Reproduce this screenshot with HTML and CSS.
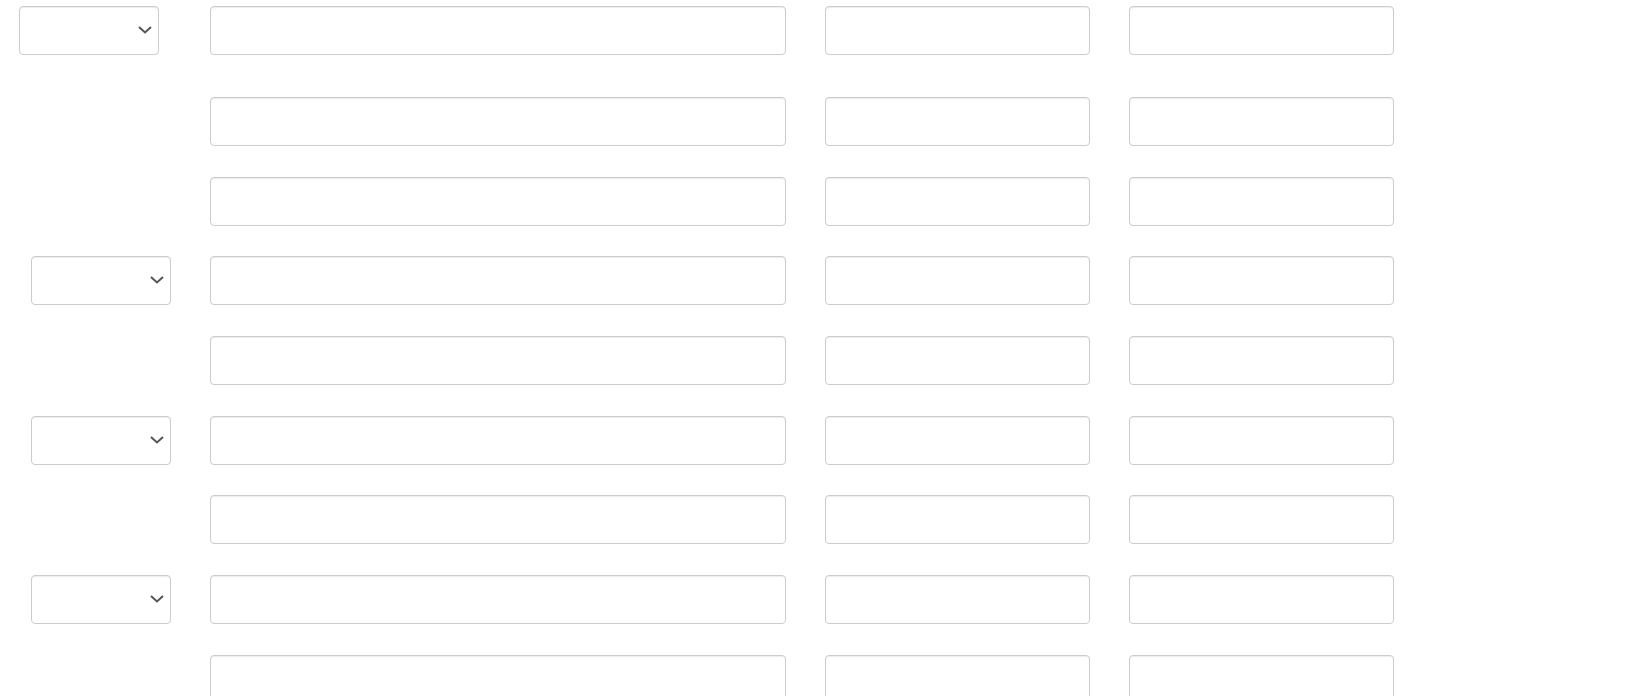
FILE: index.html
```html
<!DOCTYPE html>
<html>
<head>
<meta charset="utf-8"/>
<title>Entry grid</title>
<link rel="stylesheet" href="styles.css">
</head>
<body>
<div class="sheet">

  <div class="row row-first">
    <div class="lead">
      <div class="pick pick-first">
        <select class="field"></select>
        <svg class="caret" width="14" height="8" viewBox="0 0 14 8"><path d="M1 1 L7 6.5 L13 1" fill="none" stroke="#555" stroke-width="2"/></svg>
      </div>
    </div>
    <input class="field wide" type="text">
    <input class="field narrow" type="text">
    <input class="field narrow" type="text">
  </div>

  <div class="row">
    <div class="lead"></div>
    <input class="field wide" type="text">
    <input class="field narrow" type="text">
    <input class="field narrow" type="text">
  </div>

  <div class="row">
    <div class="lead"></div>
    <input class="field wide" type="text">
    <input class="field narrow" type="text">
    <input class="field narrow" type="text">
  </div>

  <div class="row">
    <div class="lead">
      <div class="pick">
        <select class="field"></select>
        <svg class="caret" width="14" height="8" viewBox="0 0 14 8"><path d="M1 1 L7 6.5 L13 1" fill="none" stroke="#555" stroke-width="2"/></svg>
      </div>
    </div>
    <input class="field wide" type="text">
    <input class="field narrow" type="text">
    <input class="field narrow" type="text">
  </div>

  <div class="row">
    <div class="lead"></div>
    <input class="field wide" type="text">
    <input class="field narrow" type="text">
    <input class="field narrow" type="text">
  </div>

  <div class="row">
    <div class="lead">
      <div class="pick">
        <select class="field"></select>
        <svg class="caret" width="14" height="8" viewBox="0 0 14 8"><path d="M1 1 L7 6.5 L13 1" fill="none" stroke="#555" stroke-width="2"/></svg>
      </div>
    </div>
    <input class="field wide" type="text">
    <input class="field narrow" type="text">
    <input class="field narrow" type="text">
  </div>

  <div class="row">
    <div class="lead"></div>
    <input class="field wide" type="text">
    <input class="field narrow" type="text">
    <input class="field narrow" type="text">
  </div>

  <div class="row">
    <div class="lead">
      <div class="pick">
        <select class="field"></select>
        <svg class="caret" width="14" height="8" viewBox="0 0 14 8"><path d="M1 1 L7 6.5 L13 1" fill="none" stroke="#555" stroke-width="2"/></svg>
      </div>
    </div>
    <input class="field wide" type="text">
    <input class="field narrow" type="text">
    <input class="field narrow" type="text">
  </div>

  <div class="row">
    <div class="lead"></div>
    <input class="field wide" type="text">
    <input class="field narrow" type="text">
    <input class="field narrow" type="text">
  </div>

</div>
</body>
</html>
```

FILE: styles.css
```css
body {
  margin: 0;
  background-color: white;
  font-family: "Liberation Sans", Arial, sans-serif;
  font-size: 14px;
  overflow: hidden;
}

.sheet {
  padding-top: 6px;
}

.row {
  display: flex;
  gap: 39px;
  height: 49px;
  margin-bottom: 30.67px;
}

.row-first {
  margin-bottom: 42px;
}

.lead {
  width: 171px;
  flex: none;
}

.field {
  box-sizing: border-box;
  height: 49px;
  margin: 0;
  padding: 6px 12px;
  border: 1px solid #ccc;
  border-radius: 4px;
  background-color: #fff;
  box-shadow: inset 0 1px 1px rgba(0, 0, 0, 0.075);
  font: inherit;
  color: #555;
  outline: none;
}

.wide {
  width: 576px;
  flex: none;
}

.narrow {
  width: 265px;
  flex: none;
}

.pick {
  position: relative;
  width: 140px;
  margin-left: 31px;
}

.pick-first {
  margin-left: 19px;
}

.pick select {
  width: 100%;
  -webkit-appearance: none;
  appearance: none;
}

.caret {
  position: absolute;
  right: 7px;
  top: 20px;
  pointer-events: none;
}
```
